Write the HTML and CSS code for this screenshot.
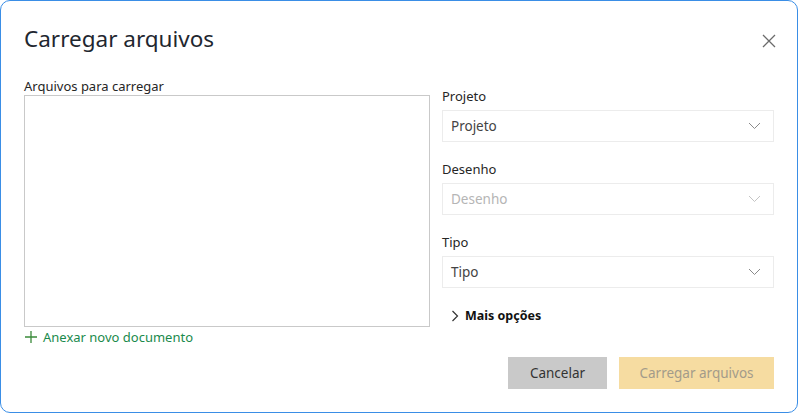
FILE: index.html
```html
<!DOCTYPE html>
<html lang="pt">
<head>
<meta charset="utf-8">
<link rel="stylesheet" href="styles.css">
</head>
<body>
<div class="dialog">
  <div class="header">
    <h1 class="title">Carregar arquivos</h1>
    <button class="close" aria-label="Fechar">
      <svg width="14" height="14" viewBox="0 0 14 14"><path d="M1 1 L13 13 M13 1 L1 13" stroke="#6b6b6b" stroke-width="1.3" fill="none"/></svg>
    </button>
  </div>
  <div class="content">
    <div class="left">
      <div class="label">Arquivos para carregar</div>
      <div class="dropzone"></div>
      <a class="attach" href="#">
        <svg width="12" height="12" viewBox="0 0 12 12"><path d="M6 0 V12 M0 6 H12" stroke="#3a8a3a" stroke-width="1.3"/></svg>
        <span>Anexar novo documento</span>
      </a>
    </div>
    <div class="right">
      <div class="field">
        <div class="label">Projeto</div>
        <div class="select"><span>Projeto</span><svg class="chev" width="13" height="8" viewBox="0 0 13 8"><path d="M1 1 L6.5 6.5 L12 1" stroke="#8a8a8a" stroke-width="1" fill="none"/></svg></div>
      </div>
      <div class="field">
        <div class="label">Desenho</div>
        <div class="select disabled"><span>Desenho</span><svg class="chev" width="13" height="8" viewBox="0 0 13 8"><path d="M1 1 L6.5 6.5 L12 1" stroke="#c4c4c4" stroke-width="1" fill="none"/></svg></div>
      </div>
      <div class="field">
        <div class="label">Tipo</div>
        <div class="select"><span>Tipo</span><svg class="chev" width="13" height="8" viewBox="0 0 13 8"><path d="M1 1 L6.5 6.5 L12 1" stroke="#8a8a8a" stroke-width="1" fill="none"/></svg></div>
      </div>
      <div class="more">
        <svg width="8" height="12" viewBox="0 0 8 12"><path d="M1.5 1 L6.5 6 L1.5 11" stroke="#333" stroke-width="1.2" fill="none"/></svg>
        <span>Mais opções</span>
      </div>
      <div class="actions">
        <button class="btn cancel">Cancelar</button>
        <button class="btn primary">Carregar arquivos</button>
      </div>
    </div>
  </div>
</div>
</body>
</html>
```
FILE: styles.css
```css
* { box-sizing: border-box; }
html, body { margin: 0; padding: 0; background: #fff; }
body { font-family: "Noto Sans", "Open Sans", sans-serif; color: #222; }
.dialog {
  width: 798px;
  height: 413px;
  border: 1px solid #3a8ee6;
  border-radius: 10px;
  padding: 0 23px;
  background: #fff;
}
.header {
  display: flex;
  justify-content: space-between;
  align-items: center;
  height: 76px;
}
.title {
  margin: 0;
  font-weight: 400;
  font-size: 22.5px;
  color: #1f2730;
  line-height: 30px;
}
.close {
  border: 0;
  background: none;
  padding: 0;
  margin-right: -3px;
  margin-top: 4px;
  display: flex;
  align-items: center;
  justify-content: center;
  width: 16px;
  height: 16px;
}
.content {
  display: grid;
  grid-template-columns: 406px 332px;
  column-gap: 12px;
}
.label {
  font-size: 13px;
  line-height: 18px;
  color: #262626;
}
.left .label { margin-bottom: 0; }
.dropzone {
  height: 232px;
  border: 1px solid #c9c9c9;
}
.attach {
  display: flex;
  align-items: center;
  gap: 6px;
  margin-top: 1px;
  margin-left: 1px;
  color: #1a8a4c;
  font-size: 13px;
  line-height: 18px;
  text-decoration: none;
}
.right { padding-top: 11px; }
.field { margin-bottom: 19px; }
.field .label { line-height: 16px; margin-bottom: 6px; }
.select {
  height: 32px;
  border: 1px solid #ececec;
  display: flex;
  align-items: center;
  justify-content: space-between;
  padding: 0 12px 0 8px;
  font-size: 13.5px;
  color: #444;
}
.select.disabled { color: #b5b5b5; }
.more {
  display: flex;
  align-items: center;
  gap: 6px;
  margin-left: 9px;
  margin-top: 6px;
  font-size: 12.5px;
  font-weight: 700;
  color: #111;
}
.actions {
  display: flex;
  justify-content: flex-end;
  gap: 12px;
  margin-top: 33px;
}
.btn {
  height: 32px;
  border: 0;
  font-family: inherit;
  font-size: 13.5px;
  padding: 0;
}
.cancel { width: 99px; background: #c9c9c9; color: #333; }
.primary { width: 155px; background: #f6dca1; color: #a39b8a; }
```
